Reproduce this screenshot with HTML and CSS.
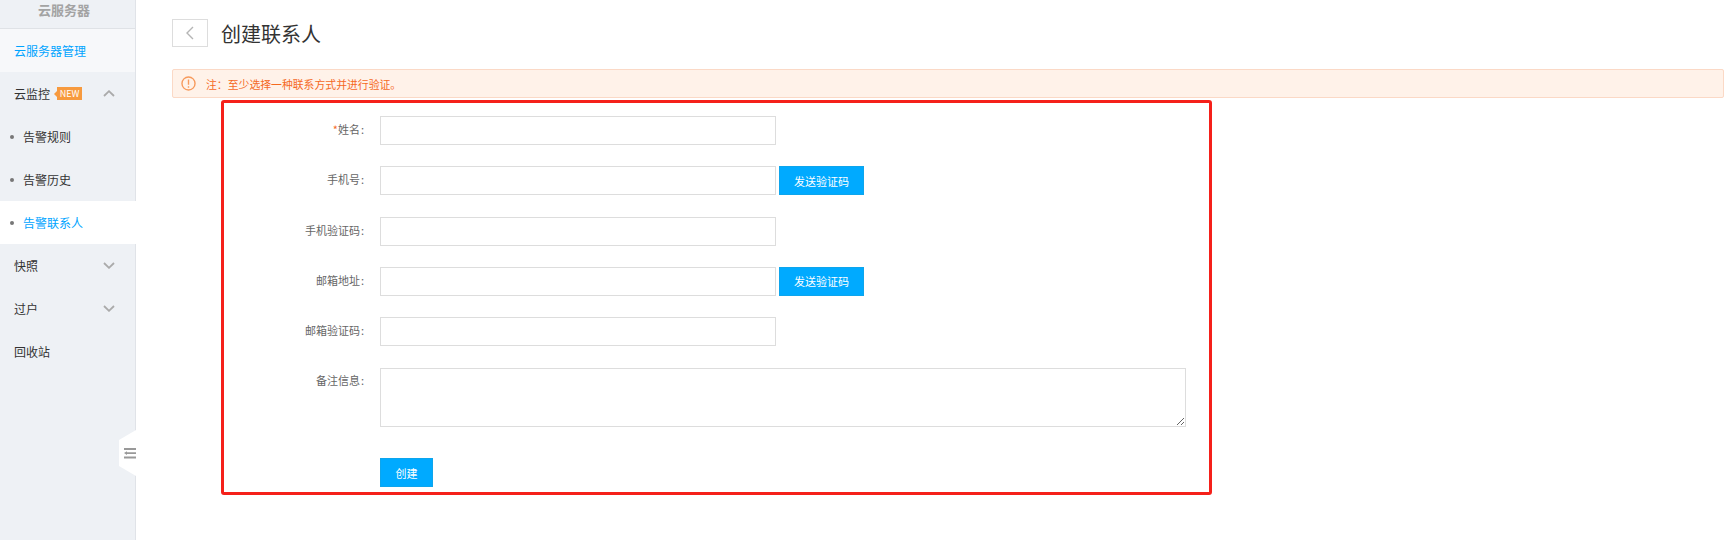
FILE: index.html
```html
<!DOCTYPE html>
<html lang="zh-CN">
<head>
    <meta charset="UTF-8">
    <title>创建联系人</title>
    <link rel="stylesheet" href="styles.css">
</head>
<body>
    <!-- Left menu -->
    <div class="sidebar">
        <div class="side-title">云服务器</div>
        <div class="side-row side-light">云服务器管理</div>
        <div class="side-row">
            <span>云监控</span>
            <span class="badge-new">NEW</span>
            <svg class="chevron" viewBox="0 0 12 7"><path d="M1 6L6 1.2L11 6"/></svg>
        </div>
        <div class="side-row side-sub"><i class="dot"></i>告警规则</div>
        <div class="side-row side-sub"><i class="dot"></i>告警历史</div>
        <div class="side-row side-sub side-active"><i class="dot"></i>告警联系人</div>
        <div class="side-row">
            <span>快照</span>
            <svg class="chevron" viewBox="0 0 12 7"><path d="M1 1L6 5.8L11 1"/></svg>
        </div>
        <div class="side-row">
            <span>过户</span>
            <svg class="chevron" viewBox="0 0 12 7"><path d="M1 1L6 5.8L11 1"/></svg>
        </div>
        <div class="side-row">回收站</div>
        <div class="side-handle">
            <svg viewBox="0 0 12 12" width="12" height="12">
                <path d="M0 1h12v2H0zM0 9.500h12v2H0zM3 5.300h9v1.600H3zM0 6.100L3 4.200V8z"/>
            </svg>
        </div>
    </div>

    <!-- Page content -->
    <div class="main">
        <div class="page-head">
            <div class="back-btn">
                <svg viewBox="0 0 8 14" width="8" height="14"><path d="M7 1L1 7L7 13"/></svg>
            </div>
            <h1>创建联系人</h1>
        </div>

        <div class="notice">
            <svg class="notice-icon" viewBox="0 0 14 14" width="15" height="15">
                <circle cx="7" cy="7" r="6.100"/>
                <path d="M7 3.200V8.200M7 9.500V11"/>
            </svg>
            <span>注：至少选择一种联系方式并进行验证。</span>
        </div>

        <div class="form-box">
            <div class="form-row">
                <label><em>*</em>姓名<span class="colon">:</span></label>
                <input type="text">
            </div>
            <div class="form-row">
                <label>手机号<span class="colon">:</span></label>
                <input type="text">
                <button class="btn btn-send">发送验证码</button>
            </div>
            <div class="form-row">
                <label>手机验证码<span class="colon">:</span></label>
                <input type="text">
            </div>
            <div class="form-row">
                <label>邮箱地址<span class="colon">:</span></label>
                <input type="text">
                <button class="btn btn-send">发送验证码</button>
            </div>
            <div class="form-row">
                <label>邮箱验证码<span class="colon">:</span></label>
                <input type="text">
            </div>
            <div class="form-row form-row-note">
                <label>备注信息<span class="colon">:</span></label>
                <textarea></textarea>
            </div>
            <div class="form-row form-row-submit">
                <button class="btn btn-create">创建</button>
            </div>
        </div>
    </div>
</body>
</html>
```

FILE: styles.css
```css
* {
    box-sizing: border-box;
}

body {
    margin: 0;
    height: 540px;
    display: flex;
    overflow: hidden;
    background-color: #fff;
    font-family: "Noto Sans CJK SC", "Noto Sans", sans-serif;
    font-size: 12px;
    color: #333;
}

/* Left menu */
.sidebar {
    position: relative;
    width: 136px;
    flex-shrink: 0;
    background-color: #eef1f5;
    border-right: 1px solid #e0e3e8;
}

.side-title {
    height: 29px;
    padding-right: 7px;
    line-height: 20px;
    text-align: center;
    font-size: 13px;
    font-weight: 700;
    color: #a3a3a3;
    border-bottom: 1px solid #dfe2e6;
}

.side-row {
    height: 43px;
    display: flex;
    align-items: center;
    padding-left: 14px;
    color: #333;
}

.side-light {
    background-color: #f7f8fa;
    color: #00a4ff;
}

.side-sub {
    padding-left: 10px;
}

.side-active {
    background-color: #fff;
    color: #00a4ff;
    margin-right: -1px;
}

.dot {
    width: 4px;
    height: 4px;
    margin-right: 9px;
    border-radius: 50%;
    background-color: #777;
}

.badge-new {
    position: relative;
    height: 13px;
    width: 25px;
    margin-left: 7px;
    line-height: 13px;
    text-align: center;
    font-size: 9px;
    color: #fff;
    background-color: #f79a3e;
}

.badge-new::before {
    content: "";
    position: absolute;
    left: -3px;
    top: 4px;
    border-top: 3px solid transparent;
    border-bottom: 3px solid transparent;
    border-right: 3px solid #f79a3e;
}

.chevron {
    width: 12px;
    height: 7px;
    margin-left: auto;
    margin-right: 20px;
}

.chevron path {
    fill: none;
    stroke: #aaa;
    stroke-width: 1.8;
}

.side-handle {
    position: absolute;
    left: 119px;
    top: 430px;
    width: 17px;
    height: 46px;
    padding: 17px 0 0 5px;
    background-color: #fff;
    clip-path: polygon(100% 0, 0 10px, 0 36px, 100% 100%);
}

.side-handle svg {
    display: block;
    fill: #999;
}

/* Page content */
.main {
    flex: 1;
    padding: 19px 1px 0 36px;
}

.page-head {
    display: flex;
    align-items: center;
    gap: 13px;
    height: 28px;
}

.page-head h1 {
    margin: 0;
    font-size: 20px;
    font-weight: 400;
    color: #333;
}

.back-btn {
    width: 36px;
    height: 28px;
    display: flex;
    align-items: center;
    justify-content: center;
    border: 1px solid #ddd;
}

.back-btn path {
    fill: none;
    stroke: #b5b5b5;
    stroke-width: 1.4;
}

.notice {
    height: 29px;
    margin-top: 22px;
    padding-left: 8px;
    display: flex;
    align-items: center;
    gap: 10px;
    font-size: 10.85px;
    color: #f5691f;
    background-color: #fff2e9;
    border: 1px solid #fbd9c6;
    border-radius: 2px;
}

.notice-icon {
    fill: none;
    stroke: #f79a5c;
    stroke-width: 1.300;
}

.form-box {
    width: 991px;
    margin: 2px 0 0 49px;
    padding: 13px 0 5px;
    border: 3px solid #f5201a;
    border-radius: 3px;
}

.form-row {
    display: flex;
    align-items: center;
    margin-bottom: 21.3px;
}

.form-row label {
    width: 141px;
    margin-right: 15px;
    padding: 0 1px 3px 0;
    text-align: right;
    font-size: 11px;
    color: #666;
}

.form-row label em {
    font-style: normal;
    color: #f5691f;
}

.colon {
    margin-left: 1px;
}

.form-row input {
    width: 396px;
    height: 29px;
    border: 1px solid #ddd;
    outline: none;
}

.form-row textarea {
    display: block;
    width: 806px;
    height: 59px;
    border: 1px solid #ddd;
    outline: none;
}

.form-row-note {
    align-items: flex-start;
    margin-top: 22.3px;
    margin-bottom: 31px;
}

.form-row-note label {
    padding-top: 4px;
    padding-bottom: 0;
}

.form-row-submit {
    margin: 0 0 0 156px;
}

.btn {
    height: 29px;
    padding: 0;
    font-family: inherit;
    font-size: 11px;
    color: #fff;
    background-color: #00aaff;
    border: 1px solid #0ea5ec;
}

.btn-send {
    width: 85px;
    margin-left: 3px;
}

.btn-create {
    width: 53px;
}
```
